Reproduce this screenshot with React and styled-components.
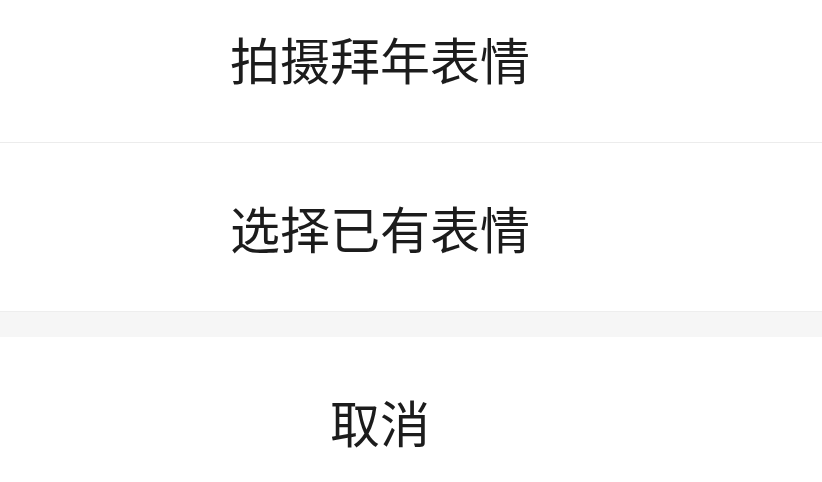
import React from 'react';
import styled, { createGlobalStyle } from 'styled-components';

const GlobalStyle = createGlobalStyle`
    html, body {
        margin: 0;
        padding: 0;
        background: #ffffff;
        overflow: hidden;
    }
    body {
        font-family: "Noto Sans CJK SC", "Noto Sans", sans-serif;
    }
`

const Sheet = styled.div`
    width: 822px;
    height: 482px;
    overflow: hidden;
    background: #ffffff;
`

const List = styled.div`
    display: flex;
    flex-direction: column;
    margin-top: -26px;
`

// text sits a bit left of the centre in the shot
const Option = styled.div`
    height: 168px;
    display: flex;
    align-items: center;
    justify-content: center;
    padding-right: 62px;
    font-size: 50px;
    color: #1c1c1c;
    background: #ffffff;
    border-bottom: ${props => props.$divider ? '1px solid #ececec' : 'none'};
`

const Gap = styled.div`
    height: 25px;
    background: #f6f6f6;
    border-top: 1px solid #eeeeee;
`

const App = () => {
    const options = ['拍摄拜年表情', '选择已有表情']

    return (
        <Sheet>
            <GlobalStyle/>
            <List>
                {options.map((text, index) => (
                    <Option key={text} $divider={index < options.length - 1}>{text}</Option>
                ))}
                <Gap/>
                <Option>取消</Option>
            </List>
        </Sheet>
    )
}

export default App
